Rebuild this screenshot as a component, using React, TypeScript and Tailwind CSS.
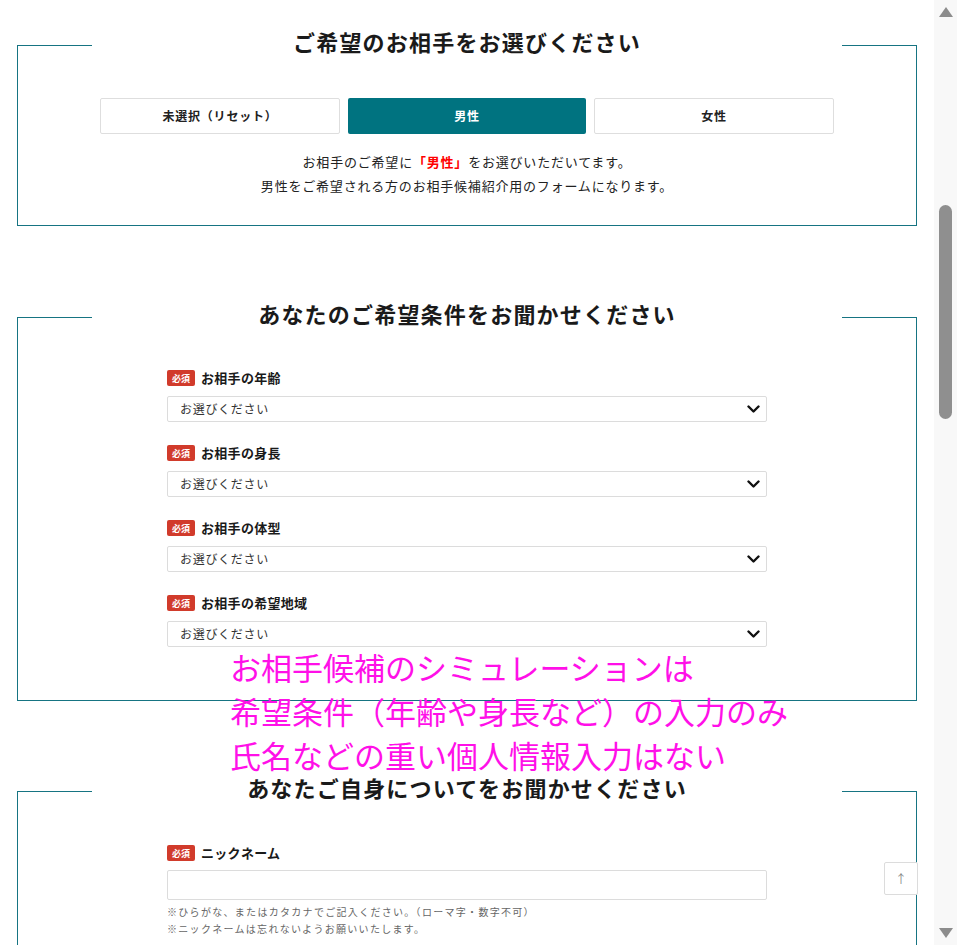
import React from "react";

const FONT = { fontFamily: '"Noto Sans CJK JP", "Noto Sans", sans-serif' };

function Badge() {
  return (
    <span className="inline-flex h-[16px] w-[28px] items-center justify-center rounded-[2px] bg-[#d13b2b] text-[9px] font-bold leading-none text-white">
      必須
    </span>
  );
}

function Label({ text }: { text: string }) {
  return (
    <div className="flex h-[20px] items-center gap-[6px]">
      <Badge />
      <span className="text-[13px] font-bold tracking-[0.3px] text-[#1a1a1a]">{text}</span>
    </div>
  );
}

function Chevron() {
  return (
    <svg width="13" height="9" viewBox="0 0 13 9" className="shrink-0">
      <polyline points="1.5,1.5 6.5,6.5 11.5,1.5" fill="none" stroke="#111" strokeWidth="2.4" strokeLinecap="round" strokeLinejoin="round" />
    </svg>
  );
}

function SelectField({ label }: { label: string }) {
  return (
    <div className="flex flex-col">
      <Label text={label} />
      <div className="mt-[8px] flex h-[26px] w-[600px] items-center justify-between rounded-[2px] border border-[#dcdcdc] bg-white pl-[12px] pr-[6px]">
        <span className="text-[12px] tracking-[0.7px] text-[#333]">お選びください</span>
        <Chevron />
      </div>
    </div>
  );
}

function Section({ title, children, className = "" }: { title: string; children: React.ReactNode; className?: string }) {
  return (
    <fieldset className={`mx-[17px] border border-[#167482] ${className}`}>
      <legend className="mx-auto w-[750px] pb-[8px] text-center text-[22px] font-bold leading-[33px] tracking-[1.2px] text-[#1a1a1a]">
        {title}
      </legend>
      {children}
    </fieldset>
  );
}

export default function App() {
  return (
    <div className="relative flex h-[945px] w-full overflow-hidden bg-white" style={FONT}>
      <div className="flex-1 pt-[25px]">
        <Section title="ご希望のお相手をお選びください" className="pb-[27px]">
          <div className="flex justify-center gap-[8px] pt-[32px]">
            <button className="h-[36px] w-[240px] rounded-[2px] border border-[#dedede] bg-white text-[12px] font-bold tracking-[0.8px] text-[#222]">
              未選択（リセット）
            </button>
            <button className="h-[36px] w-[238px] rounded-[2px] bg-[#007380] text-[12px] font-bold tracking-[0.8px] text-white">
              男性
            </button>
            <button className="h-[36px] w-[240px] rounded-[2px] border border-[#dedede] bg-white text-[12px] font-bold tracking-[0.8px] text-[#222]">
              女性
            </button>
          </div>
          <div className="mt-[16px] text-center text-[13px] leading-[24px] tracking-[0.8px] text-[#222]">
            <p>
              お相手のご希望に<span className="font-bold text-[#f00]">「男性」</span>をお選びいただいてます。
            </p>
            <p>男性をご希望される方のお相手候補紹介用のフォームになります。</p>
          </div>
        </Section>

        <Section title="あなたのご希望条件をお聞かせください" className="mt-[71px] pb-[53px]">
          <div className="flex flex-col items-center gap-[21px] pt-[30px]">
            <SelectField label="お相手の年齢" />
            <SelectField label="お相手の身長" />
            <SelectField label="お相手の体型" />
            <SelectField label="お相手の希望地域" />
          </div>
        </Section>

        <Section title="あなたご自身についてをお聞かせください" className="mt-[70px] pb-[40px]">
          <div className="flex flex-col items-center pt-[31px]">
            <div className="flex w-[600px] flex-col">
              <Label text="ニックネーム" />
              <div className="mt-[7px] h-[30px] w-[600px] rounded-[2px] border border-[#dcdcdc] bg-white" />
              <div className="mt-[3px] text-[10px] leading-[17px] tracking-[1.3px] text-[#666]">
                <p>※ひらがな、またはカタカナでご記入ください。（ローマ字・数字不可）</p>
                <p>※ニックネームは忘れないようお願いいたします。</p>
              </div>
            </div>
          </div>
        </Section>
      </div>

      {/* scrollbar */}
      <div className="flex w-[23px] shrink-0 flex-col items-center justify-between bg-[#f8f8f8] py-[7px]">
        <svg width="14" height="10" viewBox="0 0 14 10">
          <polygon points="7,0 14,10 0,10" fill="#8c8c8c" />
        </svg>
        <div className="flex flex-1 flex-col items-center pt-[188px]">
          <div className="h-[214px] w-[13px] rounded-full bg-[#8f8f8f]" />
        </div>
        <svg width="14" height="10" viewBox="0 0 14 10">
          <polygon points="0,0 14,0 7,10" fill="#8c8c8c" />
        </svg>
      </div>

      {/* annotation overlay */}
      <div className="pointer-events-none absolute left-[230px] top-[645px] text-[31px] leading-[44px] text-[#ff10e8]">
        <p>お相手候補のシミュレーションは</p>
        <p>希望条件（年齢や身長など）の入力のみ</p>
        <p>氏名などの重い個人情報入力はない</p>
      </div>

      {/* back to top */}
      <button className="absolute left-[884px] top-[862px] flex h-[33px] w-[34px] items-center justify-center rounded-[2px] border border-[#dcdcdc] bg-white text-[12px] text-[#888]">
        ↑
      </button>
    </div>
  );
}
